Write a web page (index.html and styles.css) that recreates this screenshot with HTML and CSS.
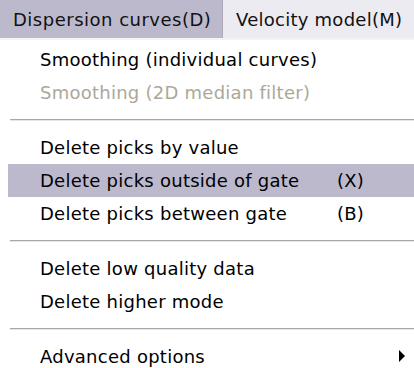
FILE: index.html
```html
<!DOCTYPE html>
<html lang="en">
<head>
    <meta charset="UTF-8">
    <title>Dispersion curves menu</title>
    <link rel="stylesheet" href="styles.css">
</head>
<body>
    <nav class="menubar">
        <div class="menubar-item active">Dispersion curves(D)</div>
        <div class="menubar-item">Velocity model(M)</div>
    </nav>
    <ul class="menu">
        <li class="menu-item">Smoothing (individual curves)</li>
        <li class="menu-item disabled">Smoothing (2D median filter)</li>
        <li class="separator"></li>
        <li class="menu-item">Delete picks by value</li>
        <li class="menu-item selected"><span class="label">Delete picks outside of gate</span><span class="key">(X)</span></li>
        <li class="menu-item"><span class="label">Delete picks between gate</span><span class="key">(B)</span></li>
        <li class="separator"></li>
        <li class="menu-item">Delete low quality data</li>
        <li class="menu-item">Delete higher mode</li>
        <li class="separator"></li>
        <li class="menu-item submenu">Advanced options<span class="arrow"></span></li>
    </ul>
</body>
</html>
```

FILE: styles.css
```css
body {
    margin: 0;
    padding: 0;
    background-color: #fff;
    font-family: 'DejaVu Sans', sans-serif;
    font-size: 18px;
    letter-spacing: 0.25px;
    color: #000;
    overflow: hidden;
}

.menubar {
    display: flex;
    height: 38px;
    background-color: #ecebf1;
    border-bottom: 2px solid #f3f2f6;
    white-space: nowrap;
}

.menubar-item {
    display: flex;
    align-items: center;
    padding: 0 10px 0 13px;
    color: #111;
}

.menubar-item.active {
    box-sizing: border-box;
    flex: 0 0 223px;
    background-color: #bcb9cd;
    border-right: 1px solid #aeabc1;
    letter-spacing: 0.5px;
}

.menu {
    list-style: none;
    margin: 0;
    padding: 3px 0 0 8px;
    white-space: nowrap;
}

.menu-item {
    display: flex;
    align-items: center;
    height: 33px;
    padding-left: 32px;
    padding-right: 10px;
}

.menu-item .label {
    width: 297px;
}

.menu-item.disabled {
    color: #aca899;
}

.menu-item.selected {
    background-color: #bcb9cd;
}

.separator {
    height: 22px;
    margin-left: 2px;
    display: flex;
    align-items: center;
}

.separator::before {
    content: "";
    flex: 1;
    border-top: 1px solid #a7a7a7;
    border-bottom: 1px solid #e6e6e6;
}

.submenu {
    position: relative;
}

.arrow {
    position: absolute;
    right: 9px;
    top: 10px;
    width: 0;
    height: 0;
    border-top: 6px solid transparent;
    border-bottom: 6px solid transparent;
    border-left: 6px solid #000;
}
```
